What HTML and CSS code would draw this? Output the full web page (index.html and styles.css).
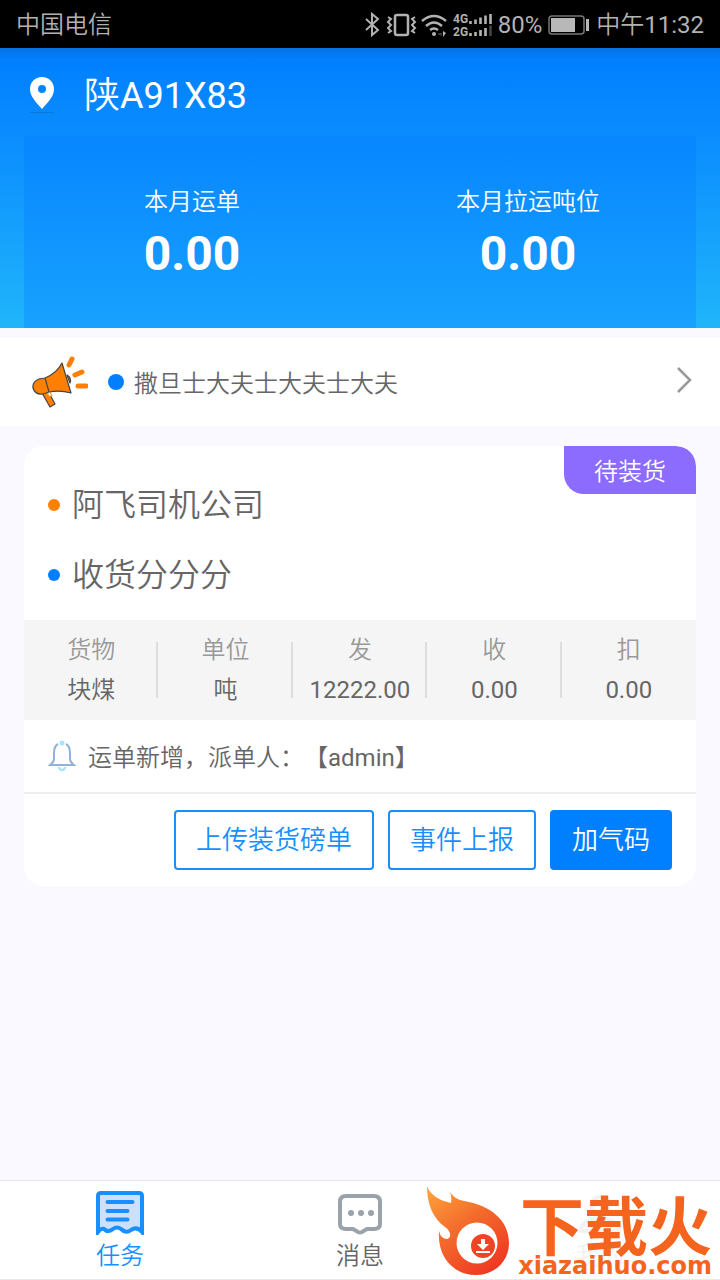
FILE: index.html
```html
<!DOCTYPE html>
<html lang="zh-CN">
<head>
<meta charset="utf-8">
<meta name="viewport" content="width=device-width, initial-scale=1">
<title>任务</title>
<link rel="stylesheet" href="styles.css">
</head>
<body>
<div class="app">
  <div class="status">
    <span class="carrier">中国电信</span>
    <div class="status-right">
      <svg class="status-icons" width="130" height="28" viewBox="0 0 130 28" fill="none" stroke="#b2b2b2" stroke-width="2" aria-hidden="true">
        <path d="M2 8l12 11-6 5V3l6 5L2 19"/>
        <rect x="31" y="4" width="13" height="20" rx="2" stroke-width="2.500"/>
        <path d="M24 6l3 2-3 3 3 3-3 3 3 3-3 2M51 6l-3 2 3 3-3 3 3 3-3 3 3 2" stroke-width="2"/>
        <path d="M58 10q12-10 24 0M62 15q8-7 16 0M66 19q4-3 8 0" stroke-width="2.500"/>
        <circle cx="70" cy="23" r="2" fill="#b2b2b2" stroke="none"/>
        <path d="M75 22v2l2-2v3" stroke="#555" stroke-width="1"/><path d="M79 20v6l3-4z" fill="#b2b2b2" stroke="none"/>
        <path d="M106.500 13v-3M111.500 13V8.500M116.500 13V6.500M121.500 13V4.500M126.500 13V3M106.500 25v-3M111.500 25v-4M116.500 25v-6M121.500 25v-8" stroke-width="2.600"/>
        <path d="M126.500 25V14.500" stroke="#444" stroke-width="2.600"/>
        <text x="89" y="12" class="net">4G</text>
        <text x="89" y="25" class="net">2G</text>
      </svg>
      <span>80%</span>
      <svg class="battery" width="42" height="20" viewBox="0 0 42 20" aria-hidden="true">
        <rect x="1" y="1" width="35" height="18" rx="3" fill="none" stroke="#777" stroke-width="1.500"/>
        <path d="M3 3h24v14H3zM38 4h3v12h-3z" fill="#b8b8b8"/>
      </svg>
      <span>中午11:32</span>
    </div>
  </div>

  <header class="hero">
    <div class="plate">
      <svg width="28" height="38" viewBox="0 0 28 38" aria-hidden="true">
        <path d="M2 35h24v1H2z" fill="#0577dc"/>
        <path fill="#fff" fill-rule="evenodd" d="M14 0C7 0 2 5 2 12c0 8 7 14 12 20 5-6 12-12 12-20C26 5 21 0 14 0zm0 8a4 4 0 1 1 0 8 4 4 0 0 1 0-8z"/>
      </svg>
      <h1>陕A91X83</h1>
    </div>
    <div class="stats">
      <div class="stat"><span>本月运单</span><strong>0.00</strong></div>
      <div class="stat"><span>本月拉运吨位</span><strong>0.00</strong></div>
    </div>
  </header>

  <a class="notice" href="#notice">
    <svg class="horn" width="56" height="52" viewBox="0 0 56 52" aria-hidden="true">
      <g fill="#ff8000" stroke="#444" stroke-width="1.200" stroke-linejoin="round">
        <path d="M10 37l8 14 5-3-7-13z"/>
        <path d="M15 36l2 4 3 0-2-4" fill="#fff" stroke="#ffa34d"/>
        <path d="M35 19q5 3 3 8z"/>
        <path d="M30 7Q25 17 13 22l-6 1Q0 26 1 32q2 7 10 6l6-2q11-2 22 1z"/>
        <path d="M13 22l4 14" fill="none"/>
      </g>
      <path d="M40 3l-3 6M43 19l7-3M46 30l8 0" stroke="#ff8000" stroke-width="5" stroke-linecap="round"/>
    </svg>
    <i class="dot dot-large"></i>
    <span class="notice-text">撒旦士大夫士大夫士大夫</span>
    <svg class="chevron" width="16" height="26" viewBox="0 0 16 26" fill="none" stroke="#999" stroke-width="2.500" aria-hidden="true"><path d="M2 1l12 12L2 25"/></svg>
  </a>

  <main class="content">
    <article class="card">
      <span class="tag">待装货</span>
      <div class="route">
        <p><i class="dot dot-orange"></i>阿飞司机公司</p>
        <p><i class="dot"></i>收货分分分</p>
      </div>
      <table class="cargo">
        <thead><tr><th>货物</th><th>单位</th><th>发</th><th>收</th><th>扣</th></tr></thead>
        <tbody><tr><td>块煤</td><td>吨</td><td>12222.00</td><td>0.00</td><td>0.00</td></tr></tbody>
      </table>
      <div class="log">
        <svg width="28" height="32" viewBox="0 0 28 32" fill="none" aria-hidden="true">
          <path d="M11 27a3 3 0 0 0 6 0" stroke="#aae3ff" stroke-width="2.500"/>
          <path d="M10 4Q6 6 6 13v6q0 3-4 6h24q-4-3-4-6v-6q0-7-4-9" stroke="#91b4d5" stroke-width="2"/>
          <circle cx="14" cy="3" r="2.500" fill="#aae3ff"/>
        </svg>
        <span>运单新增，派单人：【admin】</span>
      </div>
      <div class="actions">
        <button class="btn" type="button">上传装货磅单</button>
        <button class="btn" type="button">事件上报</button>
        <button class="btn btn-solid" type="button">加气码</button>
      </div>
    </article>
  </main>

  <nav class="tabs">
    <a class="tab tab-active" href="#task">
      <svg width="48" height="44" viewBox="0 0 48 44" fill="none" aria-hidden="true">
        <path d="M2 41V5q0-3 3-3h38q3 0 3 3v36q-5-6-11-2-5 4-10-1-4-3-8 0-5 4-9 0-3-1-6 3z" fill="#cce0fb" stroke="#188fff" stroke-width="4"/>
        <path d="M11.500 11h25M11.500 20h20M11.500 28.500h20" stroke="#188fff" stroke-width="4" stroke-linecap="round"/>
      </svg>
      <span>任务</span>
    </a>
    <a class="tab" href="#message">
      <svg width="48" height="44" viewBox="0 0 48 44" fill="none" aria-hidden="true">
        <path d="M10 5h28q6 0 6 6v22q0 5-6 5h-7l-5 3q-2 1-4 0l-5-3h-7q-6 0-6-5V11q0-6 6-6z" stroke="#9aa3aa" stroke-width="4"/>
        <g fill="#9aa3aa"><circle cx="15" cy="22" r="3"/><circle cx="25" cy="22" r="3"/><circle cx="35" cy="22" r="3"/></g>
      </svg>
      <span>消息</span>
    </a>
    <a class="tab tab-faint" href="#mine">
      <svg width="48" height="44" viewBox="0 0 48 44" fill="none" stroke="currentColor" stroke-width="4" aria-hidden="true"><rect x="16" y="6" width="16" height="17" rx="7"/><path d="M5 40q0-12 19-12t19 12z"/></svg>
      <span>我的</span>
    </a>
    <div class="brand">
      <svg width="84" height="90" viewBox="0 0 84 90" aria-hidden="true">
        <defs><linearGradient id="flame" x1="0" y1="0" x2=".7" y2="1"><stop offset="0" stop-color="#ffa63c"/><stop offset=".5" stop-color="#f36b2c"/><stop offset="1" stop-color="#ef3a23"/></linearGradient></defs>
        <path fill="url(#flame)" d="M1 0q5 13 24 17 1-6-1-11 4 7 14 9C64 19 83 34 83 57c0 18-14 32-33 32C26 89 11 69 13 45q2 8 8 8c5-1 4-8-2-12Q1 28 1 0z"/>
        <circle cx="51" cy="57" r="20.500" fill="#fff"/>
        <circle cx="57" cy="60" r="12" fill="#ef4524"/>
        <path fill="#fff" d="M55 53h4v5h4l-6 6-6-6h4zM50 65h14v2H50z"/>
      </svg>
      <div class="brand-name"><span class="brand-cn">下载火</span><span class="brand-url">xiazaihuo.com</span></div>
    </div>
  </nav>
</div>
</body>
</html>
```
FILE: styles.css
```css
* { box-sizing: border-box; }
body {
  margin: 0;
  background: #faf9ff;
  color: #666;
  font: 24px/36px Roboto, "Noto Sans CJK SC DemiLight", "Noto Sans CJK SC Light", "Noto Sans CJK SC", sans-serif;
  text-spacing-trim: space-all;
}
h1, p { margin: 0; font-weight: 400; }
a { color: inherit; text-decoration: none; }
svg { display: block; flex: none; }

.app { display: flex; flex-direction: column; min-height: 100vh; }

.status {
  display: flex;
  justify-content: space-between;
  align-items: center;
  height: 48px;
  padding: 2px 16px 0;
  background: #000;
  color: #b2b2b2;
}
.status-right { display: flex; align-items: center; }
.status-icons { margin-right: 4px; }
.battery { margin: 0 6px; }
.net { font: 700 12px/1 Roboto, sans-serif; fill: #b2b2b2; stroke: none; }

.hero {
  padding: 0 24px;
  background: linear-gradient(#0573e2, #0080ff 12px, #0b8dff 88px, #20b5fa);
}
.plate { display: flex; align-items: center; gap: 28px; height: 88px; padding: 10px 4px 2px; color: #fff; }
.plate h1 { font-size: 36px; line-height: 48px; }
.stats {
  display: grid;
  grid-template-columns: 1fr 1fr;
  height: 192px;
  padding-top: 48px;
  background: linear-gradient(#0786ff, #18a2fe);
  color: #fff;
}
.stat { display: flex; flex-direction: column; align-items: center; }
.stat strong { font-size: 48px; line-height: 68px; }

.notice {
  display: flex;
  align-items: center;
  height: 88px;
  margin-top: 10px;
  padding: 0 28px 0 32px;
  background: #fff;
}
.dot { flex: none; width: 12px; height: 12px; border-radius: 50%; background: #0080ff; }
.dot-large { width: 16px; height: 16px; margin: 0 10px 0 20px; }
.dot-orange { background: #ff8000; }
.notice-text { flex: 1; padding-top: 4px; }
.chevron { margin-bottom: 4px; }

.content { flex: 1; padding: 20px 24px; }
.card { position: relative; overflow: hidden; border-radius: 20px; background: #fff; }
.tag {
  position: absolute;
  top: 0;
  right: 0;
  padding: 8px 30px 4px;
  border-radius: 0 20px;
  background: #8c6bff;
  color: #fff;
}
.route { padding: 24px 24px 10px; font-size: 32px; line-height: 70px; }
.route p { display: flex; align-items: center; gap: 12px; }
.cargo { width: 100%; table-layout: fixed; border-collapse: collapse; background: #f5f5f5; }
.cargo th, .cargo td {
  height: 50px;
  text-align: center;
  font-weight: 400;
  background: linear-gradient(#ddd, #ddd) right bottom / 2px 28px no-repeat;
}
.cargo th { padding: 10px 0 0; color: #999; }
.cargo td { padding: 0 0 10px; background-position: right top; }
.cargo th:last-child, .cargo td:last-child { background: none; }
.log {
  display: flex;
  align-items: center;
  gap: 12px;
  height: 74px;
  padding: 0 24px;
  border-bottom: 2px solid #eee;
}
.log span { padding-top: 4px; }
.actions { display: flex; justify-content: flex-end; gap: 14px; padding: 16px 24px; }
.btn {
  height: 60px;
  padding: 0 20px;
  border: 2px solid #188fff;
  border-radius: 4px;
  background: #fff;
  color: #188fff;
  font: inherit;
  font-size: 26px;
}
.btn-solid { border-color: #0080ff; background: #0080ff; color: #fff; }

.tabs {
  position: relative;
  display: grid;
  grid-template-columns: repeat(3, 1fr);
  height: 100px;
  border-top: 1px solid #e9e8ee;
  border-bottom: 1px solid #e9e8ee;
  background: #fff;
}
.tab { display: flex; flex-direction: column; align-items: center; padding-top: 10px; line-height: 42px; }
.tab-active { color: #188fff; }
.tab-faint { color: #f2f2f2; }
.brand {
  position: absolute;
  top: 5px;
  right: 8px;
  display: flex;
  align-items: flex-start;
  gap: 8px;
  color: #f4641e;
}
.brand-name { display: flex; flex-direction: column; align-items: flex-end; gap: 6px; padding-top: 6px; }
.brand-cn { font-size: 64px; font-weight: 700; line-height: 60px; font-family: "Noto Sans CJK SC", sans-serif; }
.brand-url { font: 700 24px/16px "DejaVu Sans", sans-serif; }
```
